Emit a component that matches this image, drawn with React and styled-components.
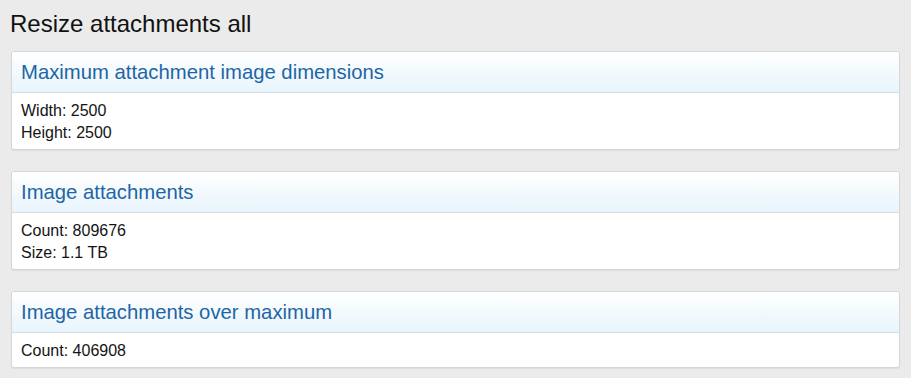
import React from 'react';
import styled, {createGlobalStyle} from 'styled-components';

const GlobalStyle = createGlobalStyle`
  html, body {
    margin: 0;
    padding: 0;
    background: #ebebeb;
  }
  body {
    font-family: "Liberation Sans", Arial, sans-serif;
    color: #141414;
  }
`;

const sections = [
    {title: 'Maximum attachment image dimensions', rows: ['Width: 2500', 'Height: 2500']},
    {title: 'Image attachments', rows: ['Count: 809676', 'Size: 1.1 TB']},
    {title: 'Image attachments over maximum', rows: ['Count: 406908']},
];

const App = () => {
    return (<Page>
        <GlobalStyle/>
        <Title>Resize attachments all</Title>
        <Stack>
            {sections.map(s => (
                <Block key={s.title}>
                    <BlockHeader>{s.title}</BlockHeader>
                    <BlockBody>
                        {s.rows.map(r => <Row key={r}>{r}</Row>)}
                    </BlockBody>
                </Block>
            ))}
        </Stack>
    </Page>);
};

export default App;

const Page = styled.div`
  padding: 10px 11px 10px 11px;
  width: 911px;
  box-sizing: border-box;
`;

const Title = styled.h1`
  margin: 0 0 13px -1px;
  font-size: 24px;
  font-weight: normal;
  line-height: 28px;
  color: #111;
`;

const Stack = styled.div`
  display: flex;
  flex-direction: column;
  gap: 21px;
`;

const Block = styled.div`
  background: #fff;
  border: 1px solid #d6d6d6;
  border-radius: 3px;
  box-shadow: 0 1px 1px rgba(0, 0, 0, 0.06);
  overflow: hidden;
`;

const BlockHeader = styled.h2`
  margin: 0;
  height: 40px;
  display: flex;
  align-items: center;
  padding: 0 9px;
  font-size: 20.3px;
  font-weight: normal;
  color: #1d66a6;
  background: linear-gradient(to bottom, #ffffff 0%, #e8f4fc 100%);
  border-bottom: 1px solid #d8dde1;
`;

const BlockBody = styled.div`
  padding: 7px 9px 5px;
`;

const Row = styled.div`
  font-size: 16px;
  line-height: 22px;
`;
